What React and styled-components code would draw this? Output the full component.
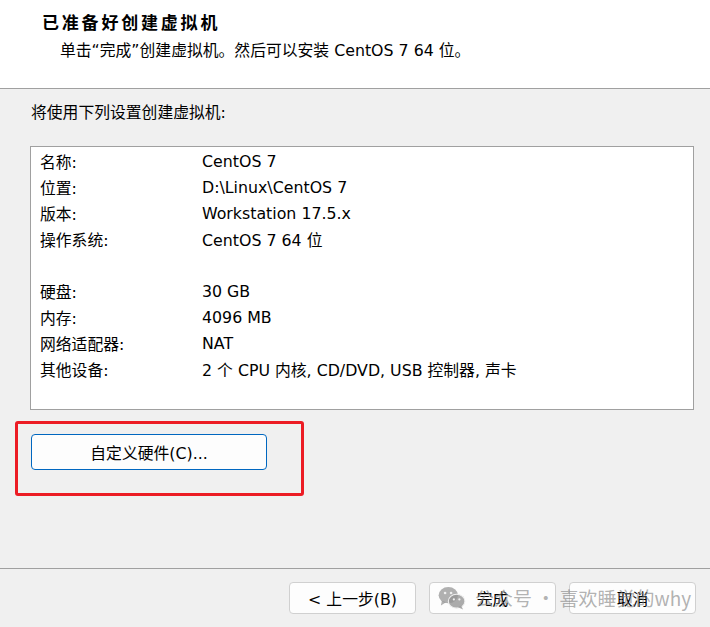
import React from "react"
import styled, { createGlobalStyle } from "styled-components"

const GlobalStyle = createGlobalStyle`
  html, body {
    margin: 0;
    padding: 0;
    background: #f0f0f0;
  }
  body {
    font-family: "DejaVu Sans", "Noto Sans CJK SC", sans-serif;
    color: #000;
  }
`

const Window = styled.div`
  position: relative;
  width: 710px;
  height: 627px;
  display: flex;
  flex-direction: column;
  background: #f0f0f0;
  overflow: hidden;
`

const Header = styled.div`
  height: 89px;
  box-sizing: border-box;
  background: #fff;
  border-bottom: 1px solid #a0a0a0;
  padding: 10px 0 0 42px;
`

const Title = styled.div`
  font-family: "Noto Sans CJK SC", sans-serif;
  font-weight: 700;
  font-size: 17px;
  letter-spacing: 2.8px;
  line-height: 24px;
`

const Subtitle = styled.div`
  margin: 5px 0 0 18px;
  font-size: 15.8px;
  line-height: 24px;
`

const Body = styled.div`
  flex: 1;
  display: flex;
  flex-direction: column;
  padding: 12px 0 0 15px;
  border-bottom: 1px solid #a0a0a0;
`

const Intro = styled.div`
  margin-left: 16px;
  font-size: 15.8px;
  line-height: 24px;
`

const SummaryBox = styled.div`
  margin: 21px 0 0 15px;
  width: 664px;
  height: 264px;
  box-sizing: border-box;
  background: #fff;
  border: 1px solid #a0a0a0;
  padding: 1px 0 0 9px;
`

const Row = styled.div`
  display: grid;
  grid-template-columns: 162px 1fr;
  height: 26px;
  align-items: center;
  font-size: 15.8px;
  margin-top: ${(p) => (p.$gap ? "26px" : "0")};
`

const Highlight = styled.div`
  margin-top: 11px;
  width: 289px;
  height: 75px;
  box-sizing: border-box;
  border: 3px solid #ec1c24;
  border-radius: 3px;
  padding: 10px 0 0 13px;
`

const Button = styled.button`
  width: ${(p) => p.$w || "127px"};
  height: ${(p) => p.$h || "32px"};
  box-sizing: border-box;
  background: #fdfdfd;
  border: 1px solid ${(p) => (p.$primary ? "#0067c0" : "#d0d0d0")};
  border-radius: 4px;
  font-family: "DejaVu Sans", "Noto Sans CJK SC", sans-serif;
  font-size: 15.8px;
  color: #000;
  padding: 0;
  cursor: default;
`

const Footer = styled.div`
  height: 58px;
  display: flex;
  justify-content: flex-end;
  align-items: flex-start;
  gap: 13px;
  padding: 13px 14px 0 0;
  box-sizing: border-box;
`

const Watermark = styled.div`
  position: absolute;
  left: 438px;
  top: 584px;
  display: flex;
  align-items: center;
  gap: 9px;
  font-family: "Noto Sans CJK SC", sans-serif;
  font-size: 19px;
  color: rgba(130, 130, 130, 0.62);
  pointer-events: none;
  white-space: nowrap;
`

const rows = [
  ["名称:", "CentOS 7"],
  ["位置:", "D:\\Linux\\CentOS 7"],
  ["版本:", "Workstation 17.5.x"],
  ["操作系统:", "CentOS 7 64 位"],
  ["硬盘:", "30 GB", true],
  ["内存:", "4096 MB"],
  ["网络适配器:", "NAT"],
  ["其他设备:", "2 个 CPU 内核, CD/DVD, USB 控制器, 声卡"],
]

function WeChatIcon() {
  return (
    <svg width="28" height="24" viewBox="0 0 30 26">
      <ellipse cx="11" cy="10" rx="10.5" ry="8.8" fill="rgba(150,150,150,0.75)" />
      <path d="M4 16 L3 21 L8.5 17.5 Z" fill="rgba(150,150,150,0.75)" />
      <circle cx="7.5" cy="7.5" r="1.4" fill="#f0f0f0" />
      <circle cx="14" cy="7.5" r="1.4" fill="#f0f0f0" />
      <ellipse cx="20" cy="16.5" rx="9" ry="7.5" fill="rgba(150,150,150,0.8)" stroke="#f0f0f0" strokeWidth="1.2" />
      <path d="M25 21.5 L27 25.5 L21.5 23 Z" fill="rgba(150,150,150,0.8)" />
      <circle cx="17" cy="14.5" r="1.2" fill="#f0f0f0" />
      <circle cx="23" cy="14.5" r="1.2" fill="#f0f0f0" />
    </svg>
  )
}

export default function App() {
  return (
    <Window>
      <GlobalStyle />
      <Header>
        <Title>已准备好创建虚拟机</Title>
        <Subtitle>单击“完成”创建虚拟机。然后可以安装 CentOS 7 64 位。</Subtitle>
      </Header>
      <Body>
        <Intro>将使用下列设置创建虚拟机:</Intro>
        <SummaryBox>
          {rows.map(([k, v, gap]) => (
            <Row key={k} $gap={gap}>
              <span>{k}</span>
              <span>{v}</span>
            </Row>
          ))}
        </SummaryBox>
        <Highlight>
          <Button $primary $w="236px" $h="36px">自定义硬件(C)...</Button>
        </Highlight>
      </Body>
      <Footer>
        <Button>&lt; 上一步(B)</Button>
        <Button>完成</Button>
        <Button>取消</Button>
      </Footer>
      <Watermark>
        <WeChatIcon />
        <span>公众号 · 喜欢睡觉的why</span>
      </Watermark>
    </Window>
  )
}
